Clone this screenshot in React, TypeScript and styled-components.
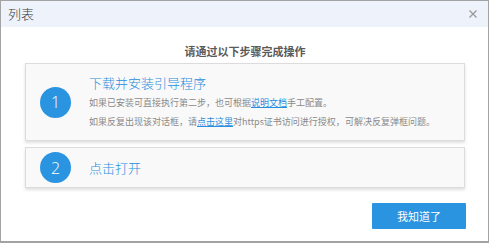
import { styled, createGlobalStyle } from 'styled-components'

const GlobalStyle = createGlobalStyle`
  html, body {
    margin: 0;
    padding: 0;
    background: #fff;
  }
  body {
    font-family: "Noto Sans CJK SC", "Noto Sans", sans-serif;
  }
`

const Dialog = styled.div`
  width: 489px;
  height: 243px;
  box-sizing: border-box;
  border: 1px solid #a3a3a3;
  border-bottom-width: 2px;
  display: flex;
  flex-direction: column;
  background: #fff;
`

const Header = styled.div`
  height: 26px;
  display: flex;
  align-items: center;
  justify-content: space-between;
  padding: 0 8px 0 7px;
  background: #eef2fa;
`

const Title = styled.div`
  font-size: 13px;
  font-weight: 300;
  color: #3a3a3a;
  line-height: 26px;
`

const Close = styled.button`
  width: 14px;
  height: 14px;
  padding: 0;
  border: 0;
  background: none;
  display: flex;
  align-items: center;
  justify-content: center;
  cursor: pointer;
`

const Body = styled.div`
  flex: 1;
  padding: 16px 23px 0 24px;
  display: flex;
  flex-direction: column;
`

const Lead = styled.div`
  text-align: center;
  font-size: 11px;
  font-weight: 700;
  line-height: 16px;
  color: #5a5a5a;
  margin-bottom: 4px;
`

const Steps = styled.div`
  display: flex;
  flex-direction: column;
  gap: 6px;
`

const Card = styled.div`
  display: flex;
  align-items: center;
  gap: 18px;
  padding: 4px 14px;
  background: #f9f9f9;
  border: 1px solid #dcdcdc;
  box-shadow: 0 2px 3px rgba(0, 0, 0, 0.13);
`

const Badge = styled.div`
  width: 31px;
  height: 31px;
  border-radius: 50%;
  background: #2a94e0;
  color: #fff;
  font-family: "Open Sans", "Noto Sans", sans-serif;
  font-size: 16px;
  font-weight: 300;
  display: flex;
  align-items: center;
  justify-content: center;
  flex-shrink: 0;
`

const Content = styled.div`
  padding: 5px 0;
  display: flex;
  flex-direction: column;
`

const StepTitle = styled.div`
  font-size: 13px;
  font-weight: 300;
  line-height: 20px;
  color: #2a8ede;
`

const Note = styled.div`
  font-size: 9px;
  line-height: 19px;
  color: #8a8a8a;
  white-space: nowrap;
`

const Link = styled.a`
  color: #2a8ede;
  text-decoration: underline;
`

const Footer = styled.div`
  display: flex;
  justify-content: flex-end;
  margin-top: 15px;
  margin-right: -1px;
`

const Button = styled.button`
  width: 94px;
  height: 26px;
  border: 0;
  border-radius: 1px;
  background: #2a94e0;
  color: #fff;
  font-family: "Noto Sans CJK SC", sans-serif;
  font-size: 11px;
  cursor: pointer;
`

export default function App() {
  return (
    <>
      <GlobalStyle />
      <Dialog>
        <Header>
          <Title>列表</Title>
          <Close aria-label="关闭">
            <svg width="8" height="8" viewBox="0 0 8 8">
              <path d="M0.5 0.5L7.5 7.5M7.5 0.5L0.5 7.5" stroke="#9a9a9a" strokeWidth="1.3" />
            </svg>
          </Close>
        </Header>
        <Body>
          <Lead>请通过以下步骤完成操作</Lead>
          <Steps>
            <Card>
              <Badge>1</Badge>
              <Content>
                <StepTitle>下载并安装引导程序</StepTitle>
                <Note>
                  如果已安装可直接执行第二步，也可根据<Link>说明文档</Link>手工配置。
                </Note>
                <Note>
                  如果反复出现该对话框，请<Link>点击这里</Link>对https证书访问进行授权，可解决反复弹框问题。
                </Note>
              </Content>
            </Card>
            <Card>
              <Badge>2</Badge>
              <Content>
                <StepTitle>点击打开</StepTitle>
              </Content>
            </Card>
          </Steps>
          <Footer>
            <Button>我知道了</Button>
          </Footer>
        </Body>
      </Dialog>
    </>
  )
}
